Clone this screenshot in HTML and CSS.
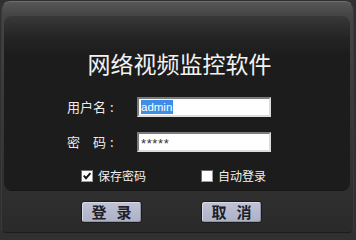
FILE: index.html
```html
<!DOCTYPE html>
<html lang="zh-CN">
<head>
<meta charset="utf-8">
<title>网络视频监控软件</title>
<link rel="stylesheet" href="styles.css">
</head>
<body>
<div class="frame">
  <div class="panel">
    <h1 class="title">网络视频监控软件</h1>
    <div class="row">
      <label class="label">用户名<span class="colon">:</span></label>
      <div class="field"><span class="sel">admin</span></div>
    </div>
    <div class="row row2">
      <label class="label">密　码<span class="colon">:</span></label>
      <div class="field"><span class="pwd">*****</span></div>
    </div>
    <div class="checks">
      <div class="check check1">
        <span class="box"><svg viewBox="0 0 10 10" width="10" height="10"><path d="M1.8 4.6 L4 7.2 L8.4 2.2" fill="none" stroke="#111" stroke-width="1.9"/></svg></span>
        <span class="ctext">保存密码</span>
      </div>
      <div class="check check2">
        <span class="box"></span>
        <span class="ctext">自动登录</span>
      </div>
    </div>
  </div>
  <div class="footer">
    <button class="btn"><span>登</span><span>录</span></button>
    <button class="btn"><span>取</span><span>消</span></button>
  </div>
</div>
</body>
</html>
```
FILE: styles.css
```css
html, body {
  margin: 0;
  padding: 0;
}
body {
  width: 356px;
  height: 234px;
  background: #303030;
  overflow: hidden;
  font-family: "Noto Sans CJK SC", "Noto Sans", sans-serif;
}
.frame {
  box-sizing: border-box;
  margin: 1px 2px 1px 1px;
  width: 353px;
  height: 232px;
  border-radius: 9px 9px 5px 5px;
  border: 1px solid #3a3a3a;
  border-top-color: #6e6e6e;
  border-bottom-color: #1c1c1c;
  background: linear-gradient(to bottom, #565656 0px, #444444 14px, #2f2f2f 190px, #2a2a2a 100%);
  display: flex;
  flex-direction: column;
}
.panel {
  box-sizing: border-box;
  margin: 14px 3px 0 2px;
  height: 174px;
  border-radius: 8px;
  background: linear-gradient(to bottom, #383838 0px, #242424 22px, #1c1c1c 40px, #1c1c1c 100%);
  box-shadow: 0 1px 0 #161616;
  padding-top: 36px;
}
.title {
  margin: 0;
  font-size: 23px;
  line-height: 23px;
  font-weight: normal;
  color: #f2f2f2;
  text-align: center;
  padding-left: 5px;
}
.row {
  display: flex;
  align-items: flex-start;
  margin-top: 22px;
  padding-left: 63px;
}
.row2 {
  margin-top: 15px;
}
.label {
  width: 70px;
  font-size: 13px;
  line-height: 13px;
  padding-top: 3px;
  color: #ececec;
}
.colon {
  margin-left: 4px;
}
.field {
  box-sizing: border-box;
  width: 134px;
  height: 20px;
  background: #fff;
  border: 2px solid #dcdcdc;
  border-top-color: #7c7c7c;
  border-left-color: #7c7c7c;
  display: flex;
  align-items: center;
  padding-left: 2px;
}
.sel {
  font-family: "Liberation Sans", Arial, sans-serif;
  font-size: 11.5px;
  line-height: 14px;
  background: #3d8ee8;
  color: #fff;
  padding: 0 1px 0 0;
}
.pwd {
  font-family: "Liberation Sans", Arial, sans-serif;
  font-size: 13px;
  line-height: 14px;
  color: #333;
  letter-spacing: 0.6px;
  padding-top: 3px;
}
.checks {
  display: flex;
  margin-top: 17px;
  padding-left: 77px;
}
.check {
  display: flex;
  align-items: center;
}
.check2 {
  margin-left: 55px;
}
.box {
  box-sizing: border-box;
  width: 12px;
  height: 12px;
  background: #fff;
  border: 1px solid #9a9a9a;
  border-top-color: #6a6a6a;
  border-left-color: #6a6a6a;
  display: flex;
  align-items: center;
  justify-content: center;
}
.box svg {
  display: block;
}
.ctext {
  margin-left: 5px;
  font-size: 12px;
  line-height: 14px;
  color: #f0f0f0;
}
.footer {
  display: flex;
  padding-top: 11px;
  padding-left: 79px;
  gap: 59px;
}
.btn {
  box-sizing: border-box;
  width: 61px;
  height: 22px;
  margin: 0;
  padding: 0;
  border: 1px solid #1c1c1c;
  border-radius: 3px;
  background: linear-gradient(to bottom, #c0c3d6, #adb1c6);
  box-shadow: inset 1px 1px 0 #d8daea, inset -1px -1px 0 #8f93a8;
  display: flex;
  align-items: center;
  justify-content: center;
  gap: 10px;
  font-family: "Noto Sans CJK SC", sans-serif;
  font-size: 15px;
  line-height: 16px;
  font-weight: bold;
  color: #1e1e2a;
}
```
